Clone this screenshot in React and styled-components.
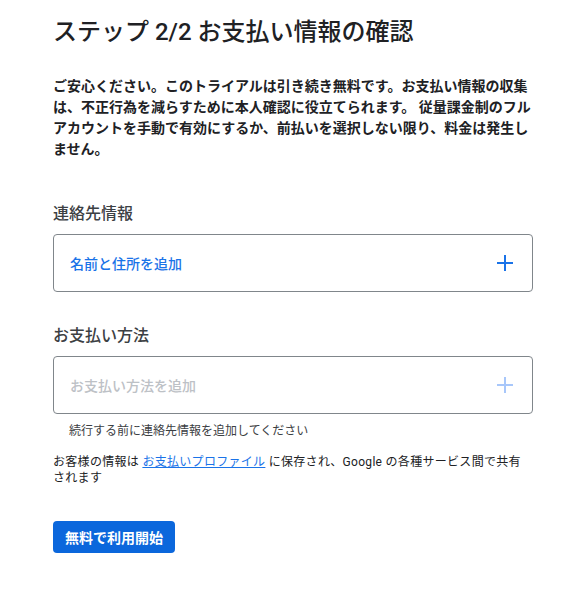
import React from "react";
import styled, { createGlobalStyle } from "styled-components";

const Global = createGlobalStyle`
  body {
    margin: 0;
    background: #ffffff;
    font-family: Roboto, "Noto Sans CJK JP", sans-serif;
    color: #202124;
  }
`;

const Page = styled.div`
  width: 480px;
  padding: 16px 0 0 53px;
  display: flex;
  flex-direction: column;
`;

const Title = styled.h1`
  margin: 0;
  font-size: 24px;
  line-height: 32px;
  font-weight: 500;
  color: #202124;
`;

const Lead = styled.p`
  margin: 28px 0 0;
  font-size: 14px;
  line-height: 21px;
  font-weight: 700;
  color: #202124;
`;

const Section = styled.section`
  display: flex;
  flex-direction: column;
  margin-top: ${(p) => p.$top}px;
`;

const SectionTitle = styled.h2`
  margin: 0 0 8px;
  font-size: 16px;
  line-height: 24px;
  font-weight: 500;
  color: #3c4043;
`;

const AddBox = styled.div`
  box-sizing: border-box;
  height: 58px;
  border: 1px solid #80868b;
  border-radius: 4px;
  display: flex;
  align-items: center;
  justify-content: space-between;
  padding: 0 18px 0 16px;
  color: ${(p) => (p.$disabled ? "#bdc1c6" : "#1a73e8")};
  font-size: 14px;
  font-weight: 500;
`;

const Helper = styled.div`
  margin: 9px 0 0 16px;
  font-size: 12px;
  line-height: 16px;
  color: #3c4043;
`;

const Info = styled.p`
  margin: 15px 0 0;
  font-size: 12px;
  line-height: 16px;
  letter-spacing: 0.3px;
  color: #202124;
`;

const Link = styled.a`
  color: #1a73e8;
  text-decoration: underline;
`;

const Button = styled.button`
  align-self: flex-start;
  margin-top: 35px;
  height: 32px;
  padding: 0 12px;
  border: none;
  border-radius: 4px;
  background: #0b67dc;
  color: #fff;
  font-family: Roboto, "Noto Sans CJK JP", sans-serif;
  font-size: 14px;
  font-weight: 700;
`;

const Plus = ({ color }) => (
  <svg width="18" height="18" viewBox="0 0 18 18">
    <path d="M9 1v16M1 9h16" stroke={color} strokeWidth="2" fill="none" />
  </svg>
);

export default function App() {
  return (
    <>
      <Global />
      <Page>
        <Title>ステップ 2/2 お支払い情報の確認</Title>
        <Lead>
          ご安心ください。このトライアルは引き続き無料です。お支払い情報の収集は、不正行為を減らすために本人確認に役立てられます。 従量課金制のフルアカウントを手動で有効にするか、前払いを選択しない限り、料金は発生しません。
        </Lead>
        <Section $top={42}>
          <SectionTitle>連絡先情報</SectionTitle>
          <AddBox>
            <span>名前と住所を追加</span>
            <Plus color="#1a73e8" />
          </AddBox>
        </Section>
        <Section $top={32}>
          <SectionTitle>お支払い方法</SectionTitle>
          <AddBox $disabled>
            <span>お支払い方法を追加</span>
            <Plus color="#a8c7fa" />
          </AddBox>
          <Helper>続行する前に連絡先情報を追加してください</Helper>
          <Info>
            お客様の情報は <Link href="#">お支払いプロファイル</Link> に保存され、Google の各種サービス間で共有されます
          </Info>
        </Section>
        <Button>無料で利用開始</Button>
      </Page>
    </>
  );
}
